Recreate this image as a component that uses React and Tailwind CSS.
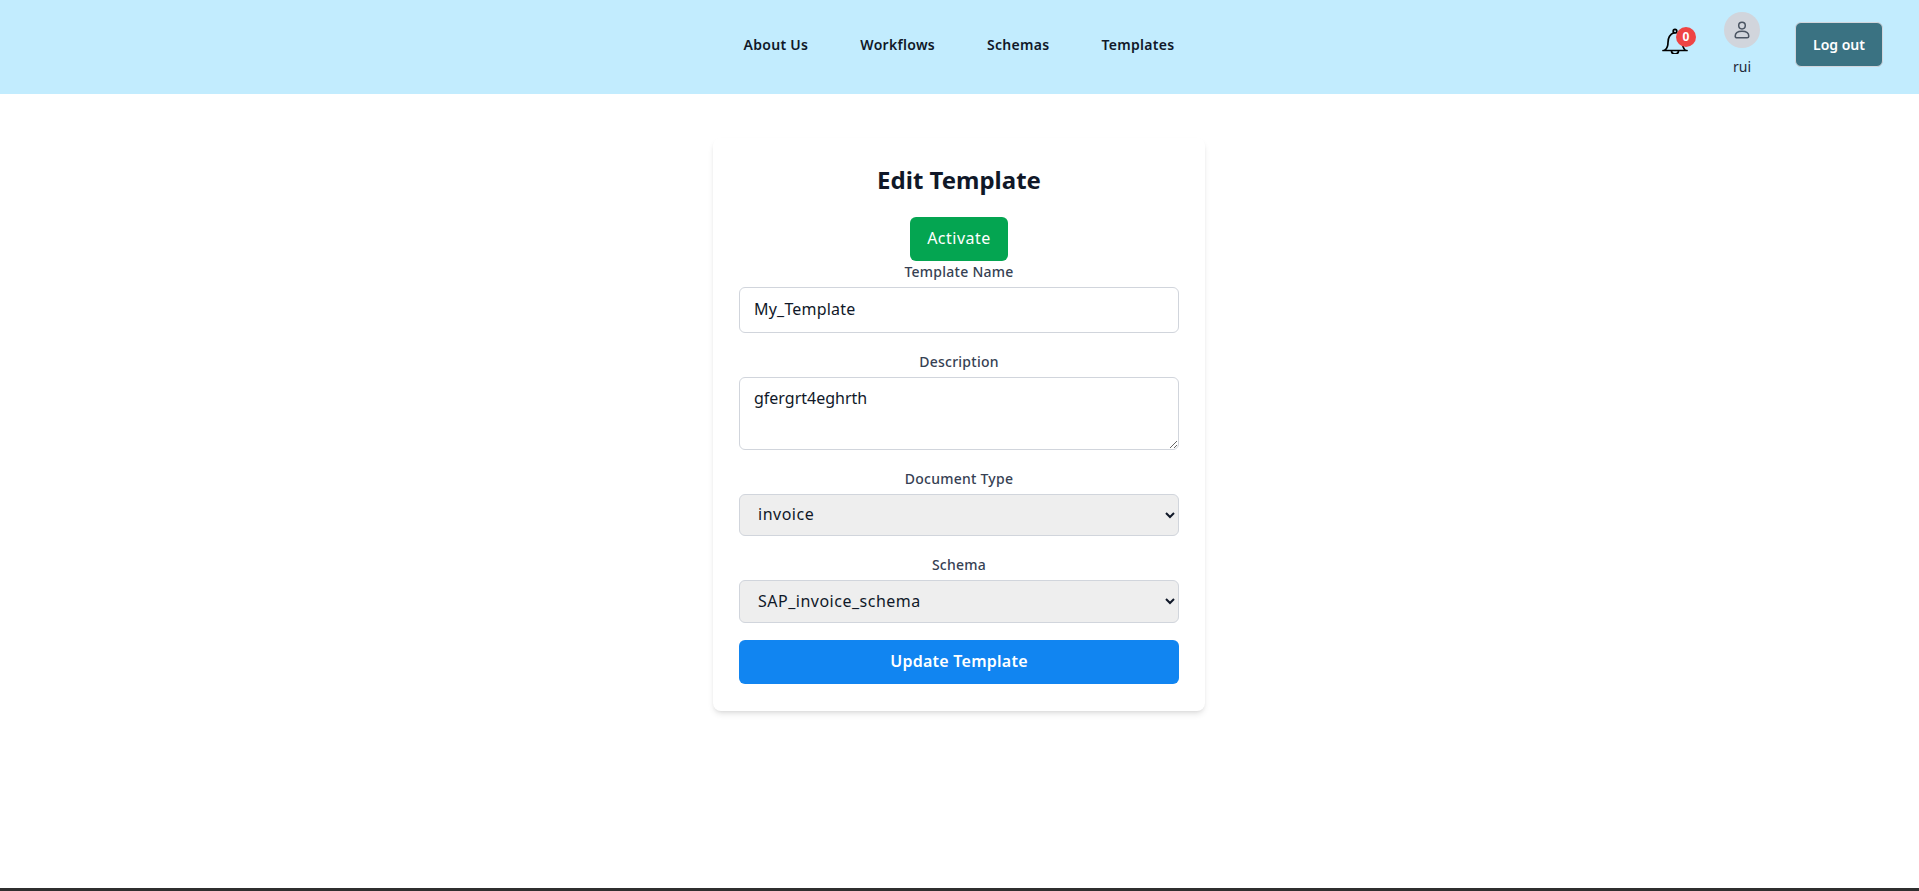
const font = "font-['Noto_Sans',sans-serif]"

const links = ['About Us', 'Workflows', 'Schemas', 'Templates']

function BellIcon() {
  return (
    <svg width="26" height="26" viewBox="0 0 26 26" fill="none" stroke="black" strokeWidth="1.7" strokeLinecap="round" strokeLinejoin="round">
      <path d="M1 22.5h24" />
      <path d="M3 22c2-1.500 3-3.500 3-7.500 0-5 2.500-8.500 6-9.800" />
      <circle cx="13" cy="3.200" r="1.800" />
      <path d="M20 12c.3 5 1 8 3 10" />
      <path d="M9.500 23c0 2 1.500 3 3.500 3s3.500-1 3.500-3" />
    </svg>
  )
}

function UserIcon() {
  return (
    <svg width="18" height="18" viewBox="0 0 18 18" fill="none" stroke="#4b5563" strokeWidth="1.500" strokeLinecap="round" strokeLinejoin="round">
      <circle cx="9" cy="4.600" r="3.300" />
      <path d="M2.200 15.300C2.200 12 5 10.200 9 10.200s6.800 1.800 6.800 5.100c0 1-.7 1.500-1.700 1.500H3.900c-1 0-1.700-.5-1.700-1.500Z" />
    </svg>
  )
}

function Label({ children }) {
  return <label className="block text-sm font-medium text-gray-700 text-center tracking-[0.25px] leading-[20px] pt-[1px] mb-[5px]">{children}</label>
}

export default function App() {
  return (
    <div className={`${font} h-[891px] flex flex-col bg-white overflow-hidden`}>
      <header className="h-[94px] shrink-0 bg-[#c2ecfe] grid grid-cols-[1fr_auto_1fr] items-start">
        <div />
        <nav className="flex items-center gap-[52px] pt-[35px] mr-[1px]">
          {links.map((l) => (
            <a key={l} className="text-sm font-semibold text-gray-900 tracking-[0.3px] leading-[20px]">{l}</a>
          ))}
        </nav>
        <div className="flex justify-end items-start pr-[36px]">
          <div className="relative mt-[28px] mr-[35px] h-[26px] w-[27px]">
            <BellIcon />
            <span className="absolute -top-[1px] left-[14px] w-5 h-5 rounded-full bg-[#ef4444] text-white text-xs font-bold flex items-center justify-center">0</span>
          </div>
          <div className="flex flex-col items-center mt-[12px] mr-[35px]">
            <div className="w-9 h-9 rounded-full bg-gray-300 flex items-center justify-center">
              <UserIcon />
            </div>
            <span className="text-sm text-gray-800 mt-[9px]">rui</span>
          </div>
          <button className="mt-[22px] w-[88px] h-[45px] bg-[#3a7282] border border-gray-300 rounded-md text-white text-sm font-semibold">Log out</button>
        </div>
      </header>

      <main className="flex-1 flex justify-center items-start pt-[44px] pr-[1px]">
        <div className="w-[492px] bg-white rounded-lg shadow-md px-[26px] pt-[24px] pb-[27px] flex flex-col">
          <h1 className="text-2xl font-bold text-gray-900 text-center mb-[19px] leading-[36px]">Edit Template</h1>
          <button className="self-center w-[98px] h-[44px] pb-[2px] rounded-md bg-[#04a551] text-white text-base tracking-[0.5px]">Activate</button>
          <Label>Template Name</Label>
          <input defaultValue="My_Template" className="w-full h-[46px] pb-[2px] border border-gray-300 rounded-md px-[14px] text-base text-gray-900 tracking-[0.2px] mb-[18px]" />
          <Label>Description</Label>
          <textarea defaultValue="gfergrt4eghrth" className="block w-full h-[73px] border border-gray-300 rounded-md px-[14px] py-[8px] text-base text-gray-900 mb-[18px]" />
          <Label>Document Type</Label>
          <select defaultValue="invoice" className="w-full h-[42px] pb-[2px] border border-gray-300 rounded-md px-[14px] text-base text-gray-900 tracking-[0.5px] bg-[#eeeeee] mb-[18px]">
            <option>invoice</option>
          </select>
          <Label>Schema</Label>
          <select defaultValue="SAP_invoice_schema" className="w-full h-[43px] pb-[2px] border border-gray-300 rounded-md px-[14px] text-base text-gray-900 tracking-[0.5px] bg-[#eeeeee] mb-[17px]">
            <option>SAP_invoice_schema</option>
          </select>
          <button className="w-full h-[44px] pb-[2px] rounded-md bg-[#1185f1] text-white text-base font-semibold tracking-[0.25px]">Update Template</button>
        </div>
      </main>

      <div className="h-[3px] shrink-0 bg-[#2f2f2f]" />
    </div>
  )
}
